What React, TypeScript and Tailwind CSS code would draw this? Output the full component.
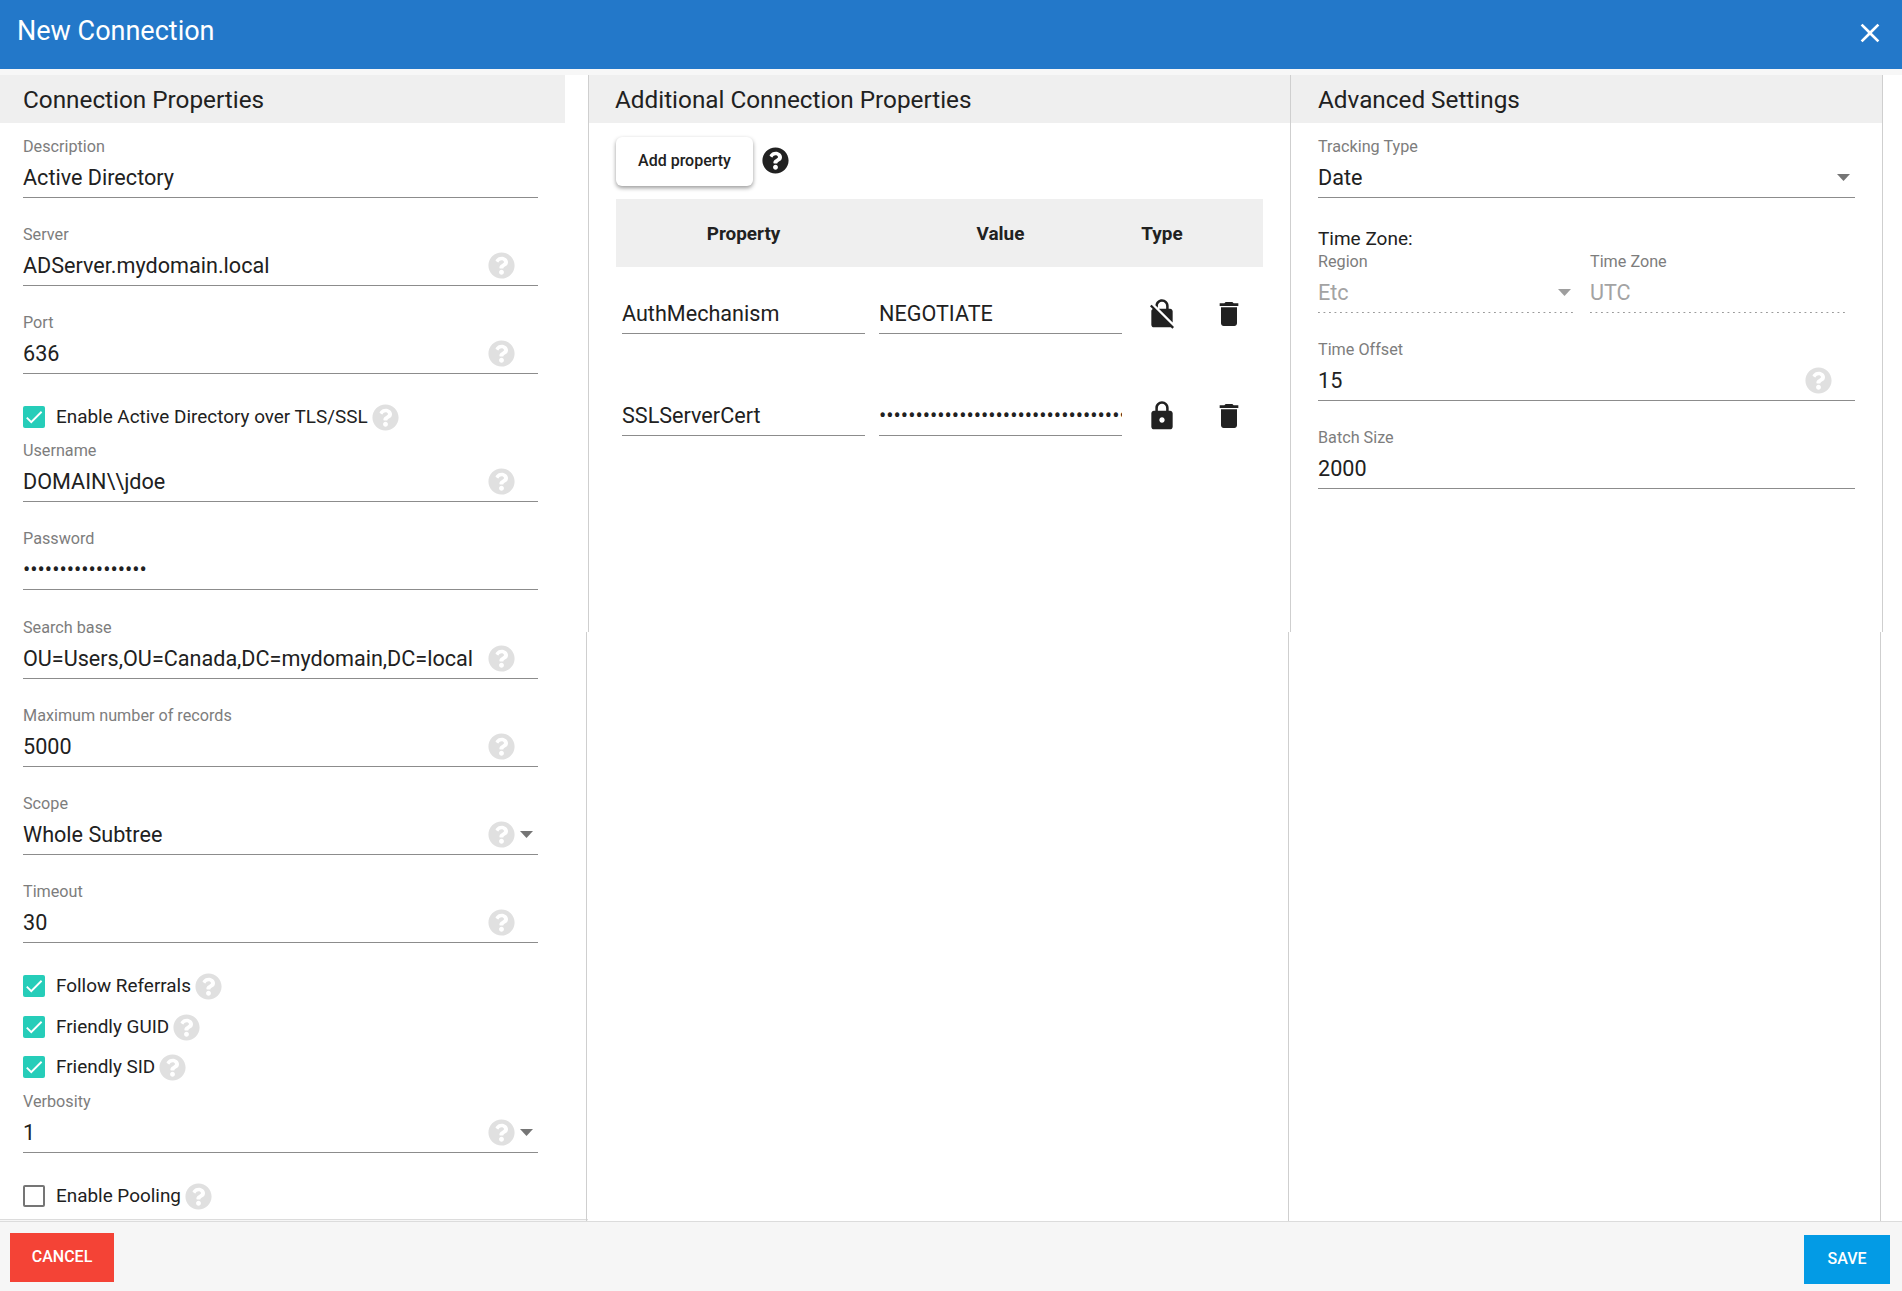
import { ReactNode } from 'react';
import { FaQuestionCircle } from 'react-icons/fa';
import { MdCheck, MdClose, MdDelete, MdLock, MdNoEncryption } from 'react-icons/md';

const Help = ({ className = '' }: { className?: string }) => (
  <FaQuestionCircle size={27} className={`shrink-0 text-[#e0e0e0] ${className}`} />
);

const Caret = ({ muted = false }: { muted?: boolean }) => (
  <svg width="13" height="7" viewBox="0 0 13 7" className={muted ? 'fill-[#9e9e9e]' : 'fill-[#757575]'}>
    <path d="M0 0h13L6.5 7z" />
  </svg>
);

interface FieldProps {
  label: string;
  value: string;
  help?: boolean;
  select?: boolean;
  disabled?: boolean;
  className?: string;
}

function Field({ label, value, help, select, disabled, className = 'mb-[25px]' }: FieldProps) {
  return (
    <div className={className}>
      <div className="h-[22px] pt-[1px] text-[16.2px] leading-[22px] text-[#7d7d7d]">{label}</div>
      <div
        className={`flex h-[41px] items-center ${
          disabled
            ? 'bg-[linear-gradient(to_right,#9a9a9a_36%,transparent_0%)] bg-[length:5.5px_1px] bg-[position:left_bottom] bg-repeat-x'
            : 'border-b border-[#8c8c8c]'
        }`}
      >
        <span
          className={`min-w-0 flex-1 overflow-hidden pt-[2px] text-[21.6px] whitespace-nowrap ${
            disabled ? 'text-[#a3a3a3]' : 'text-[#212121]'
          }`}
        >
          {value}
        </span>
        {help && <Help />}
        {(help || select) && (
          <span className={`flex items-center justify-center ${disabled ? 'w-[18px]' : 'w-[23px]'}`}>
            {select && <Caret muted={disabled} />}
          </span>
        )}
      </div>
    </div>
  );
}

function Check({ label, checked = true, className = '' }: { label: string; checked?: boolean; className?: string }) {
  return (
    <div className={`flex h-[36px] items-center ${className}`}>
      {checked ? (
        <span className="flex h-[22px] w-[22px] items-center justify-center rounded-[2px] bg-[#26cdb9]">
          <MdCheck size={22} className="text-white" />
        </span>
      ) : (
        <span className="h-[22px] w-[22px] rounded-[2px] border-2 border-[#757575]" />
      )}
      <span className="ml-[11px] text-[18.9px] leading-[24px] text-[#212121]">{label}</span>
      <Help className="ml-[4px]" />
    </div>
  );
}

function PanelTitle({ children, className = '' }: { children: ReactNode; className?: string }) {
  return (
    <h2 className={`flex h-[48px] items-center bg-[#efefef] pt-[3px] text-[24.3px] text-[#212121] ${className}`}>
      {children}
    </h2>
  );
}

function PropertyRow({ name, value, locked }: { name: string; value: string; locked: boolean }) {
  return (
    <div className="grid h-[102px] grid-cols-[257px_257px_64px_69px] items-start pt-[29px]">
      <div className="ml-[6px] flex h-[38px] w-[243px] items-center border-b border-[#8c8c8c] text-[21.6px] text-[#212121]">
        {name}
      </div>
      <div className="ml-[6px] flex h-[38px] w-[243px] items-center overflow-hidden border-b border-[#8c8c8c] text-[21.6px] whitespace-nowrap text-[#212121]">
        {value}
      </div>
      <div className="flex h-[36px] items-center justify-center">
        {locked ? <MdLock size={32} className="text-[#212121]" /> : <MdNoEncryption size={32} className="text-[#212121]" />}
      </div>
      <div className="flex h-[36px] items-center justify-center">
        <MdDelete size={32} className="text-[#212121]" />
      </div>
    </div>
  );
}

export default function App() {
  return (
    <div className="flex h-[1291px] w-full flex-col overflow-hidden bg-white font-['Roboto',sans-serif]">
      <header className="flex h-[69px] shrink-0 items-start justify-between bg-[#2378c9] pt-[14px] pr-[16px] pl-[17px]">
        <h1 className="text-[27px] leading-[34px] text-white">New Connection</h1>
        <MdClose size={32} className="mt-[3px] text-white" />
      </header>
      <div className="h-[6px] shrink-0 bg-[#f7f7f7]" />

      <main className="flex h-[1147px] shrink-0 border-b border-[#dcdcdc]">
        <div className="h-full w-[588px] shrink-0 bg-[#f6f6f6] pb-[1px]">
          <section className="h-full overflow-hidden border-b border-[#dcdcdc] bg-white">
            <PanelTitle className="w-[565px] pl-[23px]">Connection Properties</PanelTitle>
            <div className="w-[538px] pt-[12px] pl-[23px]">
              <Field label="Description" value="Active Directory" />
              <Field label="Server" value="ADServer.mydomain.local" help />
              <Field label="Port" value="636" help />
              <Check label="Enable Active Directory over TLS/SSL" className="mb-[4px]" />
              <Field label="Username" value="DOMAIN\\jdoe" help />
              <Field label="Password" value="•••••••••••••••••" className="mb-[26px]" />
              <Field label="Search base" value="OU=Users,OU=Canada,DC=mydomain,DC=local" help />
              <Field label="Maximum number of records" value="5000" help />
              <Field label="Scope" value="Whole Subtree" help select />
              <Field label="Timeout" value="30" help />
              <Check label="Follow Referrals" />
              <Check label="Friendly GUID" className="mt-[5px]" />
              <Check label="Friendly SID" className="mt-[4px] mb-[5px]" />
              <Field label="Verbosity" value="1" help select />
              <Check label="Enable Pooling" checked={false} />
            </div>
          </section>
        </div>

        <section className="flex w-[702px] shrink-0 flex-col">
          <div className="h-[557px] border-l border-[#cfcfcf]">
            <PanelTitle className="pl-[26px]">Additional Connection Properties</PanelTitle>
            <div className="pt-[14px] pl-[27px]">
              <div className="flex items-center">
                <button
                  type="button"
                  className="h-[49px] w-[137px] rounded-[6px] bg-white pb-[2px] text-[16px] font-medium text-[#212121] shadow-[0_2px_4px_rgba(0,0,0,0.4)]"
                >
                  Add property
                </button>
                <FaQuestionCircle size={27} className="ml-[9px] -translate-y-[1px] text-[#212121]" />
              </div>
              <div className="mt-[13px] w-[647px]">
                <div className="grid h-[68px] grid-cols-[257px_257px_64px_69px] items-center bg-[#efefef] pt-[2px] text-[18.9px] font-bold text-[#212121]">
                  <span className="pr-[2px] text-center">Property</span>
                  <span className="pr-[2px] text-center">Value</span>
                  <span className="text-center">Type</span>
                </div>
                <PropertyRow name="AuthMechanism" value="NEGOTIATE" locked={false} />
                <PropertyRow name="SSLServerCert" value="••••••••••••••••••••••••••••••••••••••••••••" locked />
              </div>
            </div>
          </div>
          <div className="-ml-[2px] flex-1 border-l border-[#cfcfcf]" />
        </section>

        <section className="flex w-[593px] shrink-0 flex-col">
          <div className="h-[557px] border-x border-[#cfcfcf]">
            <PanelTitle className="pl-[27px]">Advanced Settings</PanelTitle>
            <div className="w-[564px] pt-[12px] pl-[27px]">
              <Field label="Tracking Type" value="Date" select className="mb-[29px]" />
              <div className="h-[22px] pt-[1px] text-[19px] leading-[22px] text-[#212121]">Time Zone:</div>
              <div className="mt-[1px] mb-[25px] grid w-[527px] grid-cols-[255px_255px] gap-x-[17px]">
                <Field label="Region" value="Etc" select disabled className="" />
                <Field label="Time Zone" value="UTC" disabled className="" />
              </div>
              <Field label="Time Offset" value="15" help />
              <Field label="Batch Size" value="2000" />
            </div>
          </div>
          <div className="mr-[2px] -ml-[2px] flex-1 border-x border-[#cfcfcf]" />
        </section>
      </main>

      <footer className="flex flex-1 items-start justify-between bg-[#f6f6f6] pr-[12px] pl-[10px]">
        <button type="button" className="mt-[11px] h-[49px] w-[104px] bg-[#f44336] pb-[2px] text-[16px] font-medium text-white">
          CANCEL
        </button>
        <button type="button" className="mt-[13px] h-[49px] w-[86px] bg-[#039be5] pb-[2px] text-[16px] font-medium text-white">
          SAVE
        </button>
      </footer>
    </div>
  );
}
